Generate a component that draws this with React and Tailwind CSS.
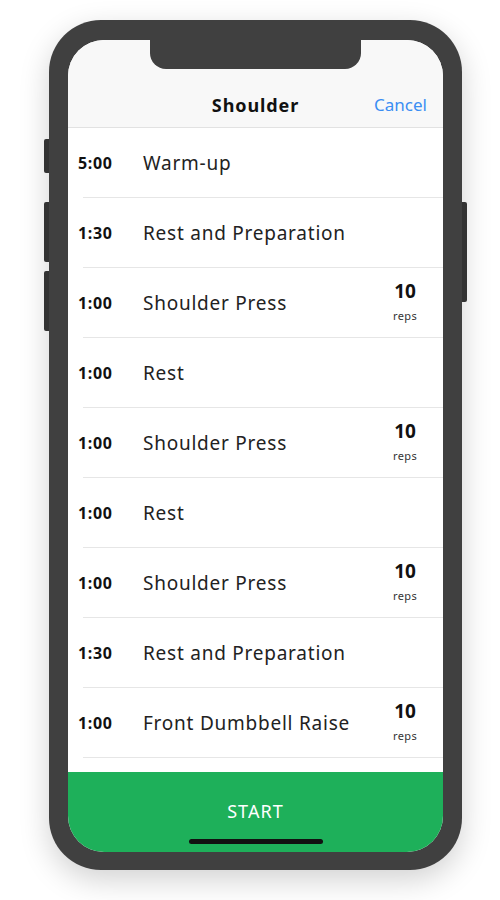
import React from "react";

const steps = [
  { time: "5:00", name: "Warm-up" },
  { time: "1:30", name: "Rest and Preparation" },
  { time: "1:00", name: "Shoulder Press", reps: 10 },
  { time: "1:00", name: "Rest" },
  { time: "1:00", name: "Shoulder Press", reps: 10 },
  { time: "1:00", name: "Rest" },
  { time: "1:00", name: "Shoulder Press", reps: 10 },
  { time: "1:30", name: "Rest and Preparation" },
  { time: "1:00", name: "Front Dumbbell Raise", reps: 10 },
];

const font = { fontFamily: "'Noto Sans', 'Liberation Sans', sans-serif" };

const StepRow = ({ step }) => (
  <div className="flex h-[70px] shrink-0 items-center pl-[10px] pr-[26px] relative">
    <span className="w-[65px] text-[16px] font-bold tracking-[0.04em] text-[#111]">{step.time}</span>
    <span className="flex-1 text-[19px] tracking-[0.04em] text-[#222]">{step.name}</span>
    {step.reps && (
      <div className="flex flex-col items-center leading-none">
        <span className="mt-[-4px] text-[19px] font-bold text-[#111]">{step.reps}</span>
        <span className="mt-[9px] text-[11px] tracking-[0.03em] text-[#333]">reps</span>
      </div>
    )}
    <div className="absolute bottom-0 left-[15px] right-0 h-px bg-[#e6e6e6]" />
  </div>
);

export default function App() {
  return (
    <div className="min-h-[900px] w-[500px] bg-white pt-[20px] pl-[49px]" style={font}>
      <div className="relative h-[850px] w-[413px] rounded-[52px] bg-[#404040] px-[19px] pt-[20px] pb-[18px] shadow-[0_10px_30px_rgba(0,0,0,0.18)]">
        {/* side buttons */}
        <div className="absolute left-[-5px] top-[119px] h-[34px] w-[5px] rounded-l-[2px] bg-[#333]" />
        <div className="absolute left-[-5px] top-[182px] h-[60px] w-[5px] rounded-l-[2px] bg-[#333]" />
        <div className="absolute left-[-5px] top-[251px] h-[60px] w-[5px] rounded-l-[2px] bg-[#333]" />
        <div className="absolute right-[-5px] top-[182px] h-[100px] w-[5px] rounded-r-[2px] bg-[#333]" />

        <div className="relative flex h-full w-full flex-col overflow-hidden rounded-[36px] bg-white">
          {/* notch */}
          <div className="absolute left-[82px] top-0 h-[29px] w-[211px] rounded-b-[16px] bg-[#404040]" />

          <div className="flex h-[88px] shrink-0 items-end border-b border-[#e2e2e2] bg-[#f8f8f8]">
            <div className="relative flex h-[44px] w-full items-center justify-center">
              <span className="text-[18px] font-bold tracking-[0.05em] text-[#111]">Shoulder</span>
              <span className="absolute right-[16px] text-[17px] text-[#3b8ef3]">Cancel</span>
            </div>
          </div>

          <div className="flex flex-1 flex-col overflow-hidden">
            {steps.map((s, i) => (
              <StepRow key={i} step={s} />
            ))}
          </div>

          <div className="relative flex h-[80px] shrink-0 items-center justify-center bg-[#1eb05a]">
            <span className="mb-[2px] text-[18px] tracking-[0.06em] text-white">START</span>
            <div className="absolute bottom-[8px] left-[121px] h-[5px] w-[134px] rounded-full bg-[#111]" />
          </div>
        </div>
      </div>
    </div>
  );
}
